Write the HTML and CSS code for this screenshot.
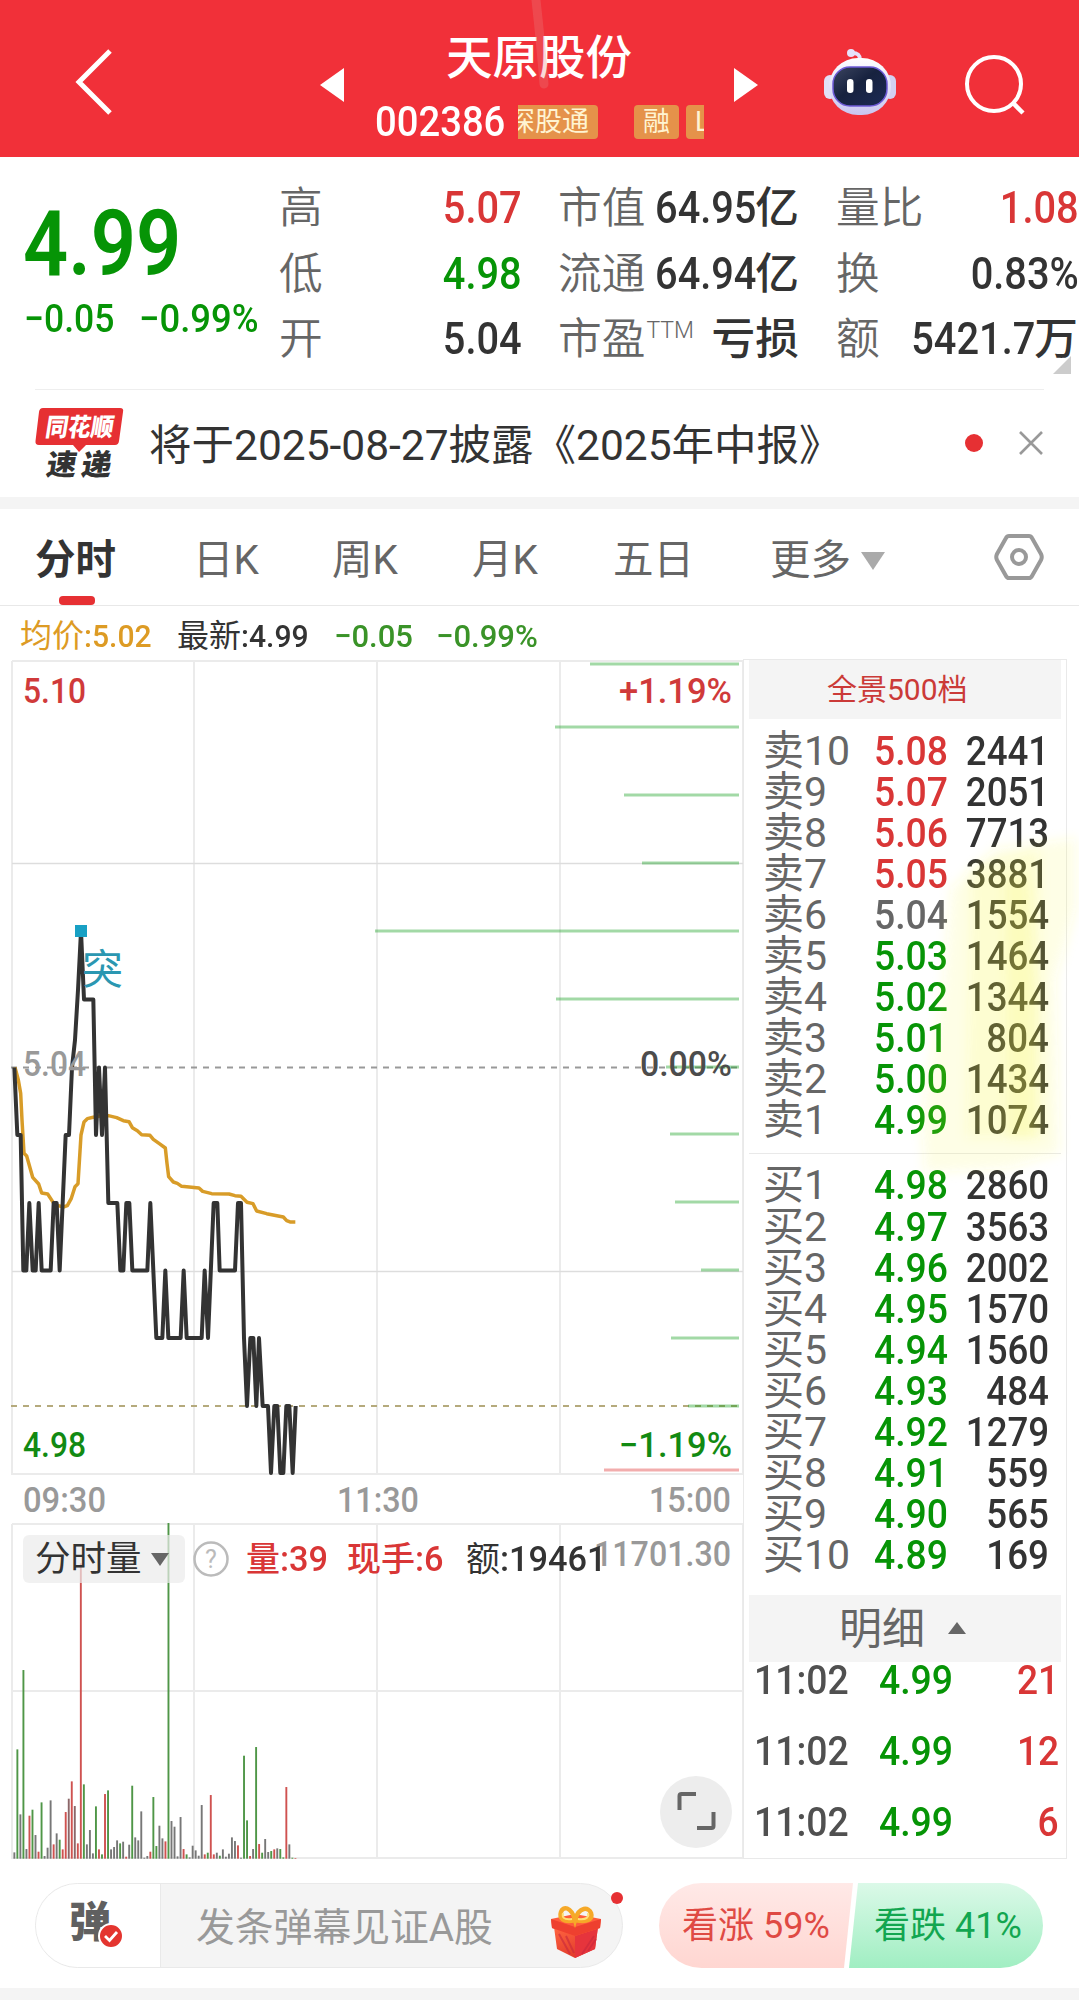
FILE: index.html
```html
<!DOCTYPE html>
<html lang="zh-CN">
<head>
<meta charset="utf-8">
<title>天原股份 002386</title>
<link rel="stylesheet" href="styles.css">
</head>
<body>
<header class="top">
  <svg class="back" width="42" height="72" viewBox="0 0 42 72"><path d="M37 5 6 36l31 31" fill="none" stroke="#fff" stroke-width="5"/></svg>
  <svg class="prev" width="24" height="34" viewBox="0 0 24 34"><path d="M24 0v34L0 17z" fill="#fff"/></svg>
  <div class="stock">
    <h1>天原股份</h1>
    <div class="code-row">
      <span class="code"><span class="n">002386</span></span>
      <div class="tags"><span class="tag first">深股通</span><span class="tag">融</span><span class="tag">L1</span></div>
    </div>
  </div>
  <svg class="next" width="24" height="34" viewBox="0 0 24 34"><path d="M0 0v34l24-17z" fill="#fff"/></svg>
  <svg class="robot" width="74" height="68" viewBox="0 0 74 68">
    <defs><linearGradient id="shell" x2="0" y2="1"><stop stop-color="#fff"/><stop offset="1" stop-color="#c9c5f0"/></linearGradient>
    <linearGradient id="visor" x2="1" y2="1"><stop stop-color="#3c4560"/><stop offset=".45" stop-color="#17223f"/><stop offset="1" stop-color="#1c2a55"/></linearGradient></defs>
    <path d="M37 12c0-5-2-7-8-7" fill="none" stroke="#e6e2fb" stroke-width="4" stroke-linecap="round"/><circle cx="28" cy="5" r="4" fill="#e6e2fb"/>
    <rect x="1" y="27" width="12" height="24" rx="6" fill="#e2e0f6"/><rect x="61" y="27" width="12" height="24" rx="6" fill="#d3d0f2"/>
    <rect x="6" y="10" width="62" height="57" rx="29" fill="url(#shell)"/>
    <rect x="10" y="19" width="54" height="39" rx="17" fill="url(#visor)" stroke="#6d5ad6" stroke-width="1.500"/>
    <rect x="24" y="31" width="6.500" height="14" rx="3.200" fill="#fff"/><rect x="43" y="31" width="6.500" height="14" rx="3.200" fill="#fff"/>
  </svg>
  <svg class="search" width="64" height="64" viewBox="0 0 64 64"><circle cx="31" cy="32" r="27" fill="none" stroke="#fff" stroke-width="4"/><path d="m50 51 10 10" stroke="#fff" stroke-width="4.500"/></svg>
  <svg class="streak" width="24" height="94" viewBox="0 0 24 94"><path d="M4 0Q9 45 12 84" fill="none" stroke="#e98080" stroke-opacity=".3" stroke-width="9" stroke-linecap="round"/></svg>
</header>

<section class="quote">
  <div class="last">
    <div class="price"><span class="n">4.99</span></div>
    <div class="change"><span><span class="n">−0.05</span></span><span><span class="n">−0.99%</span></span></div>
  </div>
  <div class="facts">
    <div class="fact"><label>高</label><b class="up"><span class="n">5.07</span></b></div>
    <div class="fact"><label>市值</label><b><span class="n">64.95</span>亿</b></div>
    <div class="fact"><label>量比</label><b class="up"><span class="n">1.08</span></b></div>
    <div class="fact"><label>低</label><b class="down"><span class="n">4.98</span></b></div>
    <div class="fact"><label>流通</label><b><span class="n">64.94</span>亿</b></div>
    <div class="fact"><label>换</label><b><span class="n">0.83%</span></b></div>
    <div class="fact"><label>开</label><b><span class="n">5.04</span></b></div>
    <div class="fact"><label>市盈<sup>TTM</sup></label><b>亏损</b></div>
    <div class="fact"><label>额</label><b><span class="n">5421.7</span>万</b></div>
  </div>
  <i class="corner"></i>
</section>

<section class="notice">
  <svg width="90" height="74" viewBox="0 0 90 74">
    <path d="M8 1h77q4 0 3 4l-4 29q-.500 4-4 4H51l-7 7-6-7H4q-4 0-3.500-4L4 5q.500-4 4-4z" fill="#e63033"/>
    <g class="brand" transform="skewX(-9)"><text x="14" y="29" textLength="68" lengthAdjust="spacingAndGlyphs" font-size="25" fill="#fff">同花顺</text><text x="21" y="68" textLength="30" lengthAdjust="spacingAndGlyphs" font-size="29" fill="#333">速</text><text x="56" y="68" textLength="30" lengthAdjust="spacingAndGlyphs" font-size="29" fill="#333">递</text></g>
  </svg>
  <p>将于2025-08-27披露《2025年中报》</p>
  <i class="dot"></i>
  <svg width="24" height="24" viewBox="0 0 24 24"><path d="m1 0 22 22M23 0 1 22" stroke="#999" stroke-width="2.600"/></svg>
</section>
<div class="band"></div>

<nav class="tabs">
  <a class="active">分时</a><a>日K</a><a>周K</a><a>月K</a><a>五日</a><a>更多<i></i></a>
  <svg width="50" height="48" viewBox="0 0 50 48" fill="none" stroke="#999" stroke-width="4"><path d="M15 3h20q2 0 3 2l9 16q1.500 3 0 6l-9 16q-1 2-3 2H15q-2 0-3-2L3 27q-1.500-3 0-6l9-16q1-2 3-2z"/><circle cx="25" cy="24" r="7"/></svg>
</nav>
<div class="legend">
  <span class="avg">均价<span class="n">:5.02</span></span><span>最新<span class="n">:4.99</span></span><span class="fall"><span class="n">−0.05</span></span><span class="fall"><span class="n">−0.99%</span></span>
</div>

<main class="market">
  <div class="charts">
    <svg class="chart" width="734" height="865" viewBox="11 659 734 865">
      <g class="grid"><path d="M12 661H744M12 1474H744M12 661V1475M194 661V1475M377 661V1475M560 661V1475M743 661V1475"/><path d="M12 863.500H744M12 1271.500H744" stroke-width="1.300" stroke="#ddd"/></g>
      <g fill="none" stroke-width="2" stroke-dasharray="6 6"><path d="M11 1067.500H739" stroke="#999"/><path d="M11 1406H739" stroke="#b5aa7c"/></g>
      <g class="depth"><path d="M590 664H739M555 727H739M624 795H739M642 863H739M375 931H739M556 999H739M666 1067H739M670 1134H739M675 1202H739M701 1270H739M671 1338H739M688 1406H739"/><path class="bid" d="M604 1470H739"/></g>
      <polyline class="avgline" transform="translate(0 1040) scale(.33333)" points="45,82 55,120 62,160 66,240 72,340 80,348 98,412 116,432 125,459 143,462 160,488 172,496 190,501 202,497 214,475 225,440 234,431 243,285 252,246 262,236 280,232 300,228 325,227 350,233 370,242 387,245 397,263 412,272 425,284 450,286 460,298 478,311 496,324 501,370 506,410 520,426 532,430 545,439 597,444 608,454 635,461 687,462 705,467 723,469 741,487 759,491 770,513 800,521 850,531 860,542 870,546 886,546"/>
      <polyline class="priceline" transform="scale(.33333 1)" points="43,1067.5 52,1135 62,1135 70,1270.5 79,1270.5 88,1203 98,1270.5 107,1270.5 116,1203 125,1270.5 152,1270.5 161,1203 170,1203 179,1270.5 197,1135 207,1135 216,1067.5 225,1040 234,990 243,931 252,999.5 280,999.5 288,1135 297,1067.5 306,1135 315,1067.5 325,1203 352,1203 361,1270.5 370,1270.5 379,1203 388,1203 397,1270.5 442,1270.5 451,1203 469,1338 487,1338 496,1270.5 505,1338 542,1338 551,1270.5 560,1338 605,1338 614,1270.5 624,1338 641,1203 652,1203 659,1270.5 705,1270.5 714,1203 723,1203 732,1338 741,1406 751,1338 760,1338 769,1406 777,1338 788,1406 804,1406 813,1473 823,1406 832,1406 841,1473 850,1473 859,1406 868,1406 878,1473 887,1406"/>
      <rect x="75" y="925" width="12" height="12" fill="#18a0c4"/>
      <text class="mark" x="82" y="984">突</text>
      <g class="axis">
        <text x="23" y="703" textLength="63" fill="#d03a3a">5.10</text>
        <text x="23" y="1076" textLength="63" fill="#999">5.04</text>
        <text x="23" y="1457" textLength="63" fill="#128a12">4.98</text>
        <text x="619" y="703" textLength="113" fill="#d03a3a">+1.19%</text>
        <text x="640" y="1076" textLength="92" fill="#4c4c4c">0.00%</text>
        <text x="619" y="1457" textLength="113" fill="#128a12">−1.19%</text>
        <g fill="#999"><text x="23" y="1512" textLength="83">09:30</text><text x="337" y="1512" textLength="82">11:30</text><text x="649" y="1512" textLength="82">15:00</text></g>
      </g>
    </svg>
    <svg class="chart" width="734" height="336" viewBox="11 1524 734 336">
      <g class="grid"><path d="M12 1524H744M12 1691H744M12 1858H744M12 1524V1859M194 1524V1859M377 1524V1859M560 1524V1859M743 1524V1859"/></g>
      <g id="bars"></g>
      <text class="scale" x="594" y="1566" textLength="137">11701.30</text>
    </svg>
    <div class="volbar">
      <span class="pick">分时量<i></i></span>
      <svg width="36" height="36" viewBox="0 0 36 36"><circle cx="18" cy="18" r="16.500" fill="none" stroke="#bbb" stroke-width="2.500"/><text x="18" y="27" text-anchor="middle" font-size="25" fill="#bbb">?</text></svg>
      <span class="up vol">量<span class="n">:39</span></span><span class="up cur">现手<span class="n">:6</span></span><span class="amt">额<span class="n">:19461</span></span>
    </div>
    <span class="expand"><svg width="40" height="40" viewBox="0 0 40 40" fill="none" stroke="#666" stroke-width="4"><path d="M3.500 19V5q0-2 2-2H20M37.500 21v14q0 2-2 2H21"/></svg></span>
  </div>

  <aside class="book">
    <div class="full">全景500档</div>
    <ol class="levels">
      <li><span>卖10</span><b class="up"><i class="n">5.08</i></b><b><i class="n">2441</i></b></li>
      <li><span>卖9</span><b class="up"><i class="n">5.07</i></b><b><i class="n">2051</i></b></li>
      <li><span>卖8</span><b class="up"><i class="n">5.06</i></b><b><i class="n">7713</i></b></li>
      <li><span>卖7</span><b class="up"><i class="n">5.05</i></b><b><i class="n">3881</i></b></li>
      <li><span>卖6</span><b class="flat"><i class="n">5.04</i></b><b><i class="n">1554</i></b></li>
      <li><span>卖5</span><b class="down"><i class="n">5.03</i></b><b><i class="n">1464</i></b></li>
      <li><span>卖4</span><b class="down"><i class="n">5.02</i></b><b><i class="n">1344</i></b></li>
      <li><span>卖3</span><b class="down"><i class="n">5.01</i></b><b><i class="n">804</i></b></li>
      <li><span>卖2</span><b class="down"><i class="n">5.00</i></b><b><i class="n">1434</i></b></li>
      <li><span>卖1</span><b class="down"><i class="n">4.99</i></b><b><i class="n">1074</i></b></li>
    </ol>
    <ol class="levels buy">
      <li><span>买1</span><b class="down"><i class="n">4.98</i></b><b><i class="n">2860</i></b></li>
      <li><span>买2</span><b class="down"><i class="n">4.97</i></b><b><i class="n">3563</i></b></li>
      <li><span>买3</span><b class="down"><i class="n">4.96</i></b><b><i class="n">2002</i></b></li>
      <li><span>买4</span><b class="down"><i class="n">4.95</i></b><b><i class="n">1570</i></b></li>
      <li><span>买5</span><b class="down"><i class="n">4.94</i></b><b><i class="n">1560</i></b></li>
      <li><span>买6</span><b class="down"><i class="n">4.93</i></b><b><i class="n">484</i></b></li>
      <li><span>买7</span><b class="down"><i class="n">4.92</i></b><b><i class="n">1279</i></b></li>
      <li><span>买8</span><b class="down"><i class="n">4.91</i></b><b><i class="n">559</i></b></li>
      <li><span>买9</span><b class="down"><i class="n">4.90</i></b><b><i class="n">565</i></b></li>
      <li><span>买10</span><b class="down"><i class="n">4.89</i></b><b><i class="n">169</i></b></li>
    </ol>
    <div class="detail"><span>明细</span><i></i></div>
    <ol class="trades">
      <li><b class="time"><i class="n">11:02</i></b><b class="down"><i class="n">4.99</i></b><b class="up"><i class="n">21</i></b></li>
      <li><b class="time"><i class="n">11:02</i></b><b class="down"><i class="n">4.99</i></b><b class="up"><i class="n">12</i></b></li>
      <li><b class="time"><i class="n">11:02</i></b><b class="down"><i class="n">4.99</i></b><b class="up"><i class="n">6</i></b></li>
    </ol>
    <svg class="marker" width="160" height="380" viewBox="0 0 160 380"><defs><filter id="soft" x="-30%" y="-30%" width="160%" height="160%"><feGaussianBlur stdDeviation="6"/></filter></defs>
      <g filter="url(#soft)" fill="#faf83c"><path d="M75 20 155 10v70l-20 70 4 175-50 15-85 5-4-55 22-130 8-100z" opacity=".12"/><path d="M50 40 118 20l5 290H45z" opacity=".12"/><path d="M84 50h22l8 110v150H86V180z" opacity=".15"/></g></svg>
  </aside>
</main>

<footer class="actions">
  <div class="compose">
    <div class="toggle"><span>弹</span><svg width="26" height="26" viewBox="0 0 26 26"><circle cx="13" cy="13" r="12" fill="#e4352f" stroke="#fff" stroke-width="2"/><path d="m7 13 4.500 4.500L19 9" fill="none" stroke="#fff" stroke-width="2.800"/></svg></div>
    <div class="field"><span>发条弹幕见证A股</span>
      <svg width="50" height="54" viewBox="0 0 50 54"><defs><linearGradient id="box" x2=".5" y2="1"><stop stop-color="#ff6540"/><stop offset="1" stop-color="#e13a2b"/></linearGradient></defs>
        <path d="m3 22 21 8 23-8-3 22-20 9-18-9z" fill="url(#box)"/><path d="M24 30v23l20-9 3-22z" fill="#e6343c"/><path d="m31 49 12-18M37 46l8-12M8 29l11 20M15 31l8 17" stroke="#c9283c" stroke-width="2" opacity=".6"/>
        <path d="m0 14 24-5 26 5-1 9-25 8-23-8z" fill="#ff5c3c"/><path d="M0 14l24 8v9L1 23zM50 14l-26 8v9l25-8z" fill="#ee402f"/>
        <path d="M24 15C12 18 8 13 10 7s10-6 14 8c4-14 14-13 16-7s-3 10-16 7" fill="none" stroke="#f6a928" stroke-width="4.500"/><path d="M21 14C12 15 11 12 12 8M27 14c9 1 11-2 10-6" fill="none" stroke="#ffdf75" stroke-width="2"/></svg>
    </div>
    <i class="badge"></i>
  </div>
  <div class="vote"><div class="bull">看涨 59%</div><div class="bear">看跌 41%</div></div>
</footer>
<div class="band"></div>
<script src="bars.js"></script>
</body>
</html>
```
FILE: styles.css
```css
* { box-sizing: border-box; }
body { margin: 0; width: 1079px; height: 2008px; overflow: hidden; background: #fff; color: #333; font-family: Roboto, "Noto Sans CJK SC", sans-serif; display: flex; flex-direction: column; }
svg { display: block; flex: none; overflow: visible; }
h1, p, ol { margin: 0; padding: 0; }
ol { list-style: none; }
b { font-weight: 500; }
.n { display: inline-block; font-style: normal; font-weight: 500; transform: scaleX(.9); transform-origin: left; }
.up { color: #d93636; }
.down { color: #069406; }
.flat { color: #666; }

.top { position: relative; flex: none; height: 157px; background: #f13039; display: flex; align-items: flex-start; }
.back { margin: 46px 0 0 73px; }
.prev { margin: 68px 0 0 205px; }
.stock { width: 390px; height: 157px; padding: 34px 0 0 31px; }
h1 { width: 330px; padding-left: 71px; font-size: 46.500px; line-height: 48px; font-weight: 500; color: #fff; white-space: nowrap; }
.code-row { display: flex; align-items: center; height: 36px; margin-top: 22px; color: #fff; }
.code { width: 143px; font-size: 42px; line-height: 38px; }
.code .n { transform: scaleX(.91); }
.tags { width: 186px; display: flex; gap: 7px; overflow: hidden; }
.tag { flex: none; height: 34px; padding: 0 9px; border-radius: 4px; background: #e5924a; color: #fff4d2; font-size: 27px; line-height: 35px; }
.tag.first { margin: 0 29px 0 -19px; }
.next { margin-top: 68px; }
.robot { margin: 48px 0 0 65px; }
.search { margin: 52px 0 0 66px; }
.streak { position: absolute; left: 532px; top: 0; }

.quote { position: relative; flex: none; height: 232px; display: flex; padding-left: 23px; }
.last { width: 256px; padding-top: 43px; color: #069406; }
.price { font-size: 90px; line-height: 90px; height: 90px; }
.price .n { transform: scaleX(.88); font-weight: 600; }
.change { display: flex; font-size: 39px; line-height: 44px; margin: 7px 0 0 1px; }
.change > span { width: 115px; }
.change > span:first-child .n { transform: scaleX(.91); }
.change .n { transform: scaleX(.935); }
.facts { display: grid; grid-template-columns: 242px 241px 242px; column-gap: 37px; grid-auto-rows: 65.500px; padding-top: 18px; line-height: 66px; font-size: 43.700px; }
.fact { display: flex; white-space: nowrap; }
label { flex: none; color: #666; font-weight: 350; }
sup { font-size: 23px; line-height: 0; vertical-align: 16px; margin-left: 1px; }
.fact b { flex: 1; min-width: 0; display: flex; justify-content: flex-end; }
.fact .n { transform: scaleX(.91); transform-origin: right; }
.fact .n:last-child { margin-right: -1px; }
.corner { position: absolute; right: 8px; top: 199px; border: 9px solid; border-color: transparent #ccc #ccc transparent; }

.notice { flex: none; height: 108px; margin: 0 35px; border-top: 1px solid #eee; display: flex; align-items: center; }
.brand { font-family: "Noto Sans CJK SC", sans-serif; font-weight: 900; }
.notice p { margin: -4px 0 0 24px; width: 816px; font-size: 42.500px; white-space: nowrap; }
.notice p + .dot { flex: none; width: 18px; height: 18px; border-radius: 50%; background: #e63033; margin: -2px 36px 0 0; }
.band { flex: none; height: 12px; background: #f4f4f4; }

.tabs { flex: none; height: 97px; padding-left: 35px; border-bottom: 1px solid #e8e8e8; display: flex; color: #666; font-size: 40.500px; line-height: 102px; }
.tabs a { position: relative; height: 96px; white-space: nowrap; }
.tabs a:nth-child(1) { width: 158px; }
.tabs a:nth-child(2) { width: 139px; }
.tabs a:nth-child(3) { width: 140px; }
.tabs a:nth-child(4) { width: 141px; }
.tabs a:nth-child(5) { width: 157px; }
.tabs a:nth-child(6) { width: 224px; }
.tabs a i { display: inline-block; vertical-align: 4px; margin-left: 10px; border: 12px solid transparent; border-top: 18px solid #aaa; border-bottom: 0; }
.tabs .active { color: #333; font-weight: 700; }
.active::after { content: ""; position: absolute; left: 24px; bottom: 0; width: 36px; height: 9px; border-radius: 4px; background: #e63033; }
.tabs svg { margin-top: 24px; }
.legend { flex: none; height: 53px; padding-left: 20px; display: flex; font-size: 32px; line-height: 61px; white-space: nowrap; }
.legend > span { width: 157px; }
.legend .n { transform: scaleX(.94); }
.legend .avg { color: #dd9b24; }
.legend > .fall { width: 102px; color: #3a9328; }
.legend > .fall .n { transform: scaleX(.97); }

.market { flex: none; height: 1201px; display: flex; }
.charts { position: relative; width: 743px; padding-left: 11px; }
.grid { fill: none; stroke: #ebebeb; stroke-width: 2; }
.depth { stroke: #0a9a14; stroke-opacity: .38; stroke-width: 3; }
.depth .bid { stroke: #dc2828; }
.avgline, .priceline { fill: none; stroke: #d89c28; stroke-width: 3.500; stroke-linejoin: round; vector-effect: non-scaling-stroke; }
.priceline { stroke: #333; stroke-width: 4; }
.mark { font-size: 41px; fill: #2b97b1; }
.axis text, .scale { font-size: 35px; font-weight: 500; }
.scale { fill: #999; }
.volbar { position: absolute; left: 23px; top: 876px; height: 48px; display: flex; align-items: center; font-size: 34px; line-height: 51px; white-space: nowrap; }
.pick { width: 162px; height: 48px; padding-left: 12px; border-radius: 6px; background: rgba(235,235,235,.7); font-size: 35.500px; display: flex; align-items: center; }
.pick i { margin-left: 9px; border: 9px solid transparent; border-top: 13px solid #666; border-bottom: 0; }
.volbar svg { margin: 0 17px 0 8px; }
.volbar .n { font-size: 35px; transform: scaleX(.98); }
.vol { width: 101px; font-weight: 500; }
.cur { width: 119px; font-weight: 500; }
.expand { position: absolute; left: 660px; top: 1117px; width: 72px; height: 72px; padding: 15px 0 0 16px; border-radius: 50%; background: #ededed; }

.book { position: relative; width: 324px; height: 1200px; border: 1px solid #e9e9e9; padding: 0 5px; }
.full { height: 59px; background: #f4f4f4; color: #cb3a38; font-size: 30px; line-height: 60px; padding-left: 78px; }
.levels { margin: 12px 0 12px; }
.levels li { display: flex; height: 41.050px; line-height: 41px; font-size: 41px; padding: 0 12px 0 14px; }
.levels span { width: 111px; color: #666; white-space: nowrap; }
.levels b:nth-child(2) { width: 73px; }
.levels b:nth-child(2) .n { transform: scaleX(.91); }
.levels b:last-child { flex: 1; min-width: 0; display: flex; justify-content: flex-end; }
.levels b:last-child .n, .trades b:last-child .n { transform: scaleX(.895); transform-origin: right; }
.levels.buy { margin: 0 0 19px; padding-top: 11px; border-top: 1px solid #e9e9e9; }
.detail { height: 67px; background: #f4f4f4; color: #666; font-size: 43px; display: flex; align-items: center; padding-left: 90px; }
.detail span { line-height: 67px; padding-top: 3px; }
.detail i { margin-left: 23px; border: 9px solid transparent; border-bottom: 12px solid #666; border-top: 0; }
.trades { margin-top: -18px; }
.trades li { display: flex; height: 71px; line-height: 72px; font-size: 41.500px; padding: 0 2px 0 5px; }
.trades .time { width: 125px; color: #505050; }
.trades b:nth-child(2) { width: 80px; }
.trades b:last-child { flex: 1; text-align: right; }
.marker { position: absolute; left: 177px; top: 168px; }

.actions { flex: none; height: 128px; padding: 23px 36px 0 35px; display: flex; align-items: flex-start; justify-content: space-between; }
.compose { position: relative; width: 588px; height: 85px; border: 1px solid #e9e9e9; border-radius: 43px; background: #f4f4f4; display: flex; }
.toggle { position: relative; width: 125px; border-right: 1px solid #e9e9e9; border-radius: 42px 0 0 42px; background: #fff; padding-left: 33px; font-size: 42px; line-height: 77px; font-weight: 900; color: #606060; }
.toggle svg { position: absolute; left: 62px; top: 39px; }
.field { display: flex; align-items: center; flex: 1; padding: 0 21px 0 35px; justify-content: space-between; color: #999; font-size: 38.800px; white-space: nowrap; }
.field span { margin-top: -4px; }
.field svg { margin-top: 12px; }
.badge { position: absolute; right: -1px; top: 8px; width: 12px; height: 12px; border-radius: 50%; background: #e63033; }
.vote { width: 384px; height: 85px; display: flex; font-size: 36px; line-height: 86px; white-space: pre; }
.bull { width: 194px; padding-left: 23px; border-radius: 43px 0 0 43px; color: #df4a44; background: linear-gradient(#ffe9e7, #ffd6d1); clip-path: polygon(0 0, 100% 0, 185px 100%, 0 100%); }
.bear { width: 194px; margin-left: -4px; padding-left: 25px; border-radius: 0 43px 43px 0; color: #12a650; background: linear-gradient(#dbf9e8, #a0eec2); clip-path: polygon(9px 0, 100% 0, 100% 100%, 0 100%); }
```
FILE: bars.js
```js
// One bar per minute from 09:30: colour key (r rise, g fall, k flat, m mixed) and height in thirds of a pixel.
const volumes = "k19 g328 k133 g566 k29 r129 g147 k71 r21 g169 k8 k33 k175 r43 k76 g57 r28 r140 m180 r232 m158 r46 r886 g223 k43 k86 k16 g157 r28 g13 r194 g205 k28 k35 k55 g46 k51 r6 k42 g219 k64 k55 k142 k3 k8 r21 g185 g38 k99 k61 r52 g1007 k113 k96 k7 k125 r29 g13 k4 k39 k25 k9 k161 r13 g18 r191 r13 k18 g9 k28 k6 k15 k64 k53 r40 k3 g309 g115 r8 k29 g335 r44 g18 k59 k20 g23 r28 k31 g29 g4 r215 k43 g3 r2".split(" ");
const colors = { r: "#cf5250", g: "#4f9647", k: "#777", m: "#8b6668" };
document.getElementById("bars").innerHTML = volumes.map((v, i) => {
  const h = Number(v.slice(1)) / 3;
  const x = 13.4 + i * 3.022;
  return `<rect x="${x.toFixed(2)}" y="${(1858.7 - h).toFixed(2)}" width="1.9" height="${h.toFixed(2)}" fill="${colors[v[0]]}"/>`;
}).join("");
document.querySelectorAll(".axis text, .scale").forEach(t => t.setAttribute("lengthAdjust", "spacingAndGlyphs"));
```
